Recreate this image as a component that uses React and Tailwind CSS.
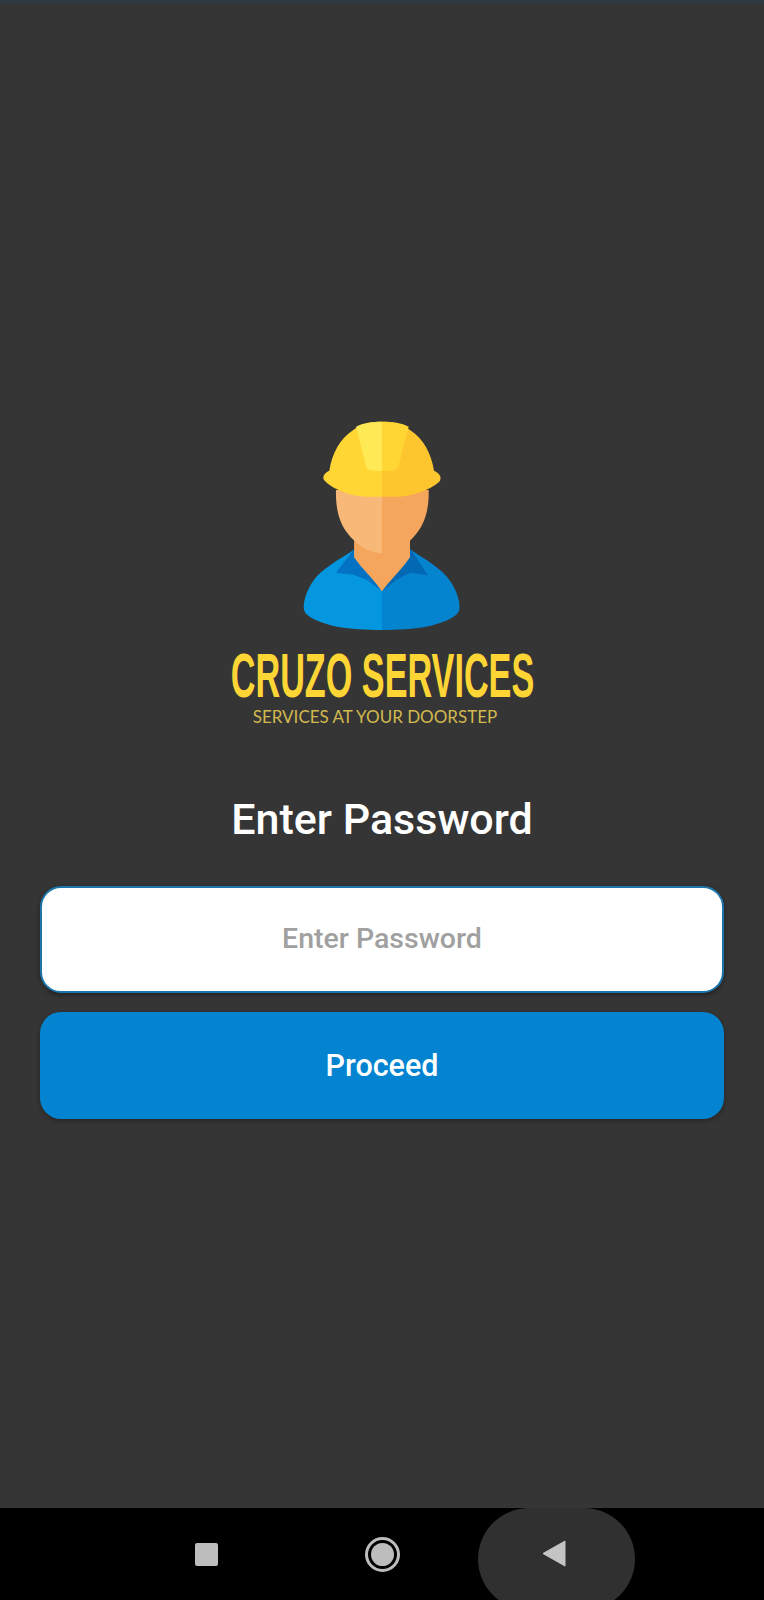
function WorkerLogo() {
  return (
    <svg width="340" height="240" viewBox="0 0 1020 720" className="block -translate-x-[2px]">
      {/* shirt */}
      <path d="M434 448 C390 478 335 505 308 545 C288 575 278 610 282 630 C288 650 320 665 370 678 C420 688 470 690 516 690 L516 574 Z" fill="#0497e0" />
      <path d="M600 448 C645 478 695 505 722 545 C742 575 752 610 748 630 C742 650 710 665 660 678 C610 688 560 690 516 690 L516 574 Z" fill="#0483cf" />
      {/* collar */}
      <path d="M432 448 L378 518 L430 524 L470 540 L516 574 Z" fill="#0372c2" />
      <path d="M602 448 L654 526 L600 518 L562 538 L516 574 Z" fill="#0368b4" />
      {/* neck and face */}
      <path d="M378 270 L516 270 L516 574 C490 535 455 505 433 472 L433 422 C396 388 376 345 378 270 Z" fill="#f8b878" />
      <path d="M656 270 L516 270 L516 574 C545 535 578 505 600 472 L600 422 C636 388 658 345 656 270 Z" fill="#f5a55c" />
      <path d="M433 422 C460 448 490 458 516 460 L516 574 C490 535 455 505 433 472 Z" fill="#f5a55c" />
      {/* helmet */}
      <path d="M516 65 C480 65 450 72 430 90 C390 115 366 160 358 212 C345 218 336 228 342 240 C362 264 420 290 470 290 L516 290 Z" fill="#ffd633" />
      <path d="M516 65 C552 65 580 72 600 90 C640 115 664 160 672 212 C685 218 696 228 690 242 C672 264 610 290 560 290 L516 290 Z" fill="#fdc52e" />
      <path d="M516 65 C490 65 458 68 438 80 L470 205 C480 214 500 214 516 212 Z" fill="#ffe955" />
      <path d="M516 65 C545 65 576 68 596 80 L564 205 C552 214 532 214 516 212 Z" fill="#ffd633" />
    </svg>
  );
}

export default function App() {
  return (
    <div className="flex h-[1600px] w-[764px] flex-col overflow-hidden bg-[#353535] font-['Roboto',sans-serif]">
      <div className="h-[3px] bg-[#2f3a42]"></div>
      <div className="flex flex-1 flex-col items-center px-10 pt-[397px]">
        <WorkerLogo />
        <div className="mt-[4px] h-[62px] origin-center scale-x-[0.543] whitespace-nowrap font-['Liberation_Sans',sans-serif] text-[63px] leading-[62px] font-bold text-[#fdd535]">
          CRUZO SERVICES
        </div>
        <div className="mt-[1px] -translate-x-[7px] whitespace-nowrap font-['Lato',sans-serif] text-[17px] leading-5 text-[#d2b94e]">
          SERVICES AT YOUR DOORSTEP
        </div>
        <h1 className="mt-[65px] text-[43px] leading-[54px] font-medium text-white">Enter Password</h1>
        <div className="mt-[40px] flex h-[107px] w-full items-center justify-center rounded-[21px] border-2 border-[#1c76ab] bg-white shadow-[0_2px_5px_rgba(0,0,0,0.4)]">
          <span className="text-[28.5px] font-medium text-[#a0a0a0]">Enter Password</span>
        </div>
        <div className="mt-[19px] flex h-[107px] w-full items-center justify-center rounded-[21px] bg-[#0484d0] shadow-[0_2px_5px_rgba(0,0,0,0.3)]">
          <span className="text-[30.5px] font-medium text-white">Proceed</span>
        </div>
      </div>
      <div className="grid h-[92px] grid-cols-[175px_175px_175px] grid-rows-[92px] justify-center overflow-hidden bg-black">
        <div className="flex items-center justify-center">
          <div className="h-[23px] w-[23px] -translate-x-px rounded-[2px] bg-[#bdbdbd]"></div>
        </div>
        <div className="flex items-center justify-center">
          <div className="flex h-[35px] w-[35px] items-center justify-center rounded-full border-[3px] border-[#bdbdbd]">
            <div className="h-[23px] w-[23px] rounded-full bg-[#bdbdbd]"></div>
          </div>
        </div>
        <div className="flex items-start justify-center">
          <div className="flex h-[102px] w-[157px] shrink-0 -translate-x-px items-center justify-center rounded-[51px] bg-[#303030] pr-1 pb-[10px]">
            <svg width="24" height="28" viewBox="0 0 24 28">
              <path d="M23 1 L1 13.5 L23 26 Z" fill="#c4c4c4" stroke="#c4c4c4" strokeWidth="1" strokeLinejoin="round" />
            </svg>
          </div>
        </div>
      </div>
    </div>
  );
}
